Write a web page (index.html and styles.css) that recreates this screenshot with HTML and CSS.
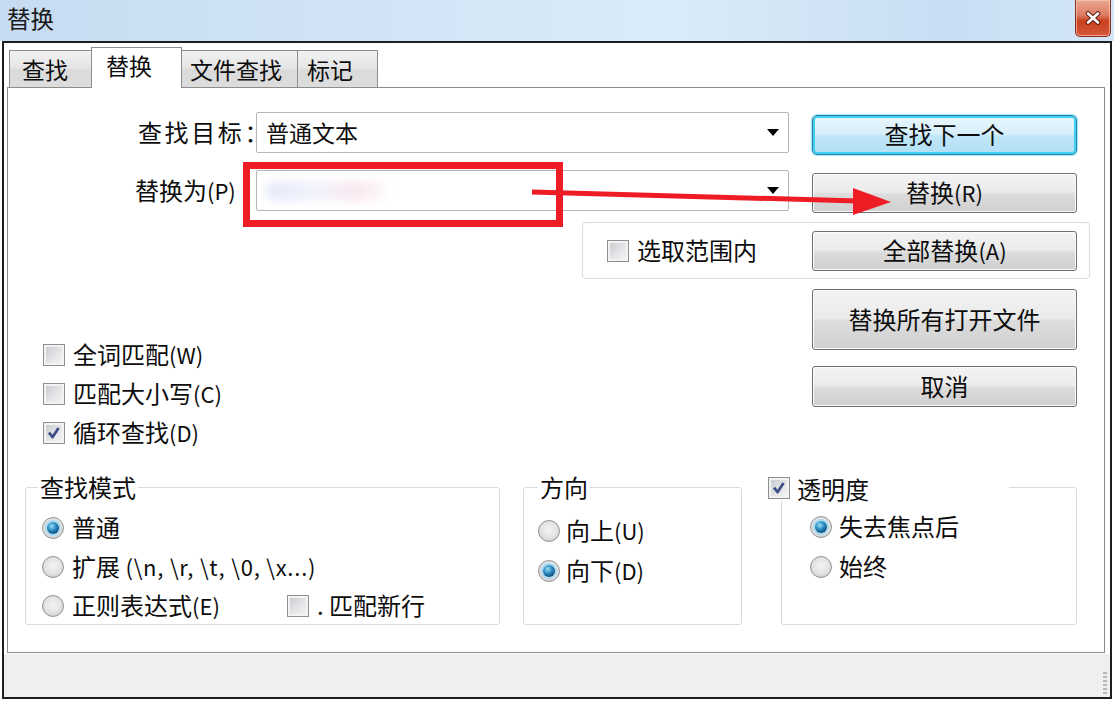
FILE: index.html
```html
<!DOCTYPE html>
<html lang="zh-CN">
<head>
<meta charset="utf-8">
<title>替换</title>
<link rel="stylesheet" href="styles.css">
</head>
<body>
<div class="window">
  <div class="titlebar">
    <span class="title">替换</span>
    <div class="close">
      <svg width="16" height="14" viewBox="0 0 16 14"><path d="M3 2.5 L13 11.5 M13 2.5 L3 11.5" stroke="#5a1a10" stroke-width="4.5" stroke-linecap="round"/><path d="M3 2.5 L13 11.5 M13 2.5 L3 11.5" stroke="#fff" stroke-width="2.6" stroke-linecap="round"/></svg>
    </div>
  </div>
  <div class="frame">
    <div class="content">
      <div class="tabs">
        <div class="tab t1">查找</div>
        <div class="tab t2 active">替换</div>
        <div class="tab t3">文件查找</div>
        <div class="tab t4">标记</div>
      </div>
      <div class="page">
        <div class="top">
          <div class="left">
            <div class="field f1">
              <span class="lbl l1">查找目标：</span>
              <div class="combo"><span class="val">普通文本</span><span class="arrow"></span></div>
            </div>
            <div class="field f2">
              <span class="lbl l2">替换为<span class="lat">(P)</span></span>
              <div class="combo"><span class="smudge"></span><span class="arrow"></span></div>
            </div>
            <div class="checks">
              <div class="chk"><span class="box"></span><span>全词匹配<span class="lat">(W)</span></span></div>
              <div class="chk"><span class="box"></span><span>匹配大小写<span class="lat">(C)</span></span></div>
              <div class="chk"><span class="box"><svg class="tick" viewBox="0 0 22 22"><path d="M5.5 10.5 L9.5 15.5 L16 5.5" fill="none" stroke="#3b4f88" stroke-width="3" stroke-linejoin="round"/></svg></span><span>循环查找<span class="lat">(D)</span></span></div>
            </div>
          </div>
          <div class="right">
            <button class="btn default">查找下一个</button>
            <button class="btn b2">替换<span class="lat">(R)</span></button>
            <div class="selbox">
              <div class="chk"><span class="box"></span><span>选取范围内</span></div>
              <button class="btn">全部替换<span class="lat">(A)</span></button>
            </div>
            <button class="btn tall">替换所有打开文件</button>
            <button class="btn cancel">取消</button>
          </div>
        </div>
        <div class="groups">
          <div class="group g1">
            <div class="legend">查找模式</div>
            <div class="opts">
              <div class="opt"><span class="radio on"></span><span>普通</span></div>
              <div class="opt"><span class="radio"></span><span>扩展 <span class="lat wide">(\n, \r, \t, \0, \x...)</span></span></div>
              <div class="opt">
                <div class="opt-first"><span class="radio"></span><span>正则表达式<span class="lat">(E)</span></span></div>
                <div class="chk"><span class="box"></span><span>. 匹配新行</span></div>
              </div>
            </div>
          </div>
          <div class="group g2">
            <div class="legend">方向</div>
            <div class="opts">
              <div class="opt"><span class="radio"></span><span>向上<span class="lat">(U)</span></span></div>
              <div class="opt"><span class="radio on"></span><span>向下<span class="lat">(D)</span></span></div>
            </div>
          </div>
          <div class="group g3">
            <div class="legend"><div class="chk"><span class="box"><svg class="tick" viewBox="0 0 22 22"><path d="M5.5 10.5 L9.5 15.5 L16 5.5" fill="none" stroke="#3b4f88" stroke-width="3" stroke-linejoin="round"/></svg></span><span>透明度</span></div></div>
            <div class="opts">
              <div class="opt"><span class="radio on"></span><span>失去焦点后</span></div>
              <div class="opt"><span class="radio"></span><span>始终</span></div>
            </div>
          </div>
        </div>
      </div>
    </div>
    <div class="status"><span class="grip"></span></div>
  </div>
  <div class="annot-rect"></div>
  <svg class="annot-arrow" width="1114" height="702" viewBox="0 0 1114 702">
    <line x1="532" y1="192" x2="858" y2="201" stroke="#ee1c24" stroke-width="5"/>
    <polygon points="853,188 891,202 853,215" fill="#ee1c24"/>
  </svg>
</div>
</body>
</html>
```

FILE: styles.css
```css
* { box-sizing: border-box; }
html, body { margin: 0; padding: 0; }
body {
  width: 1114px;
  height: 702px;
  overflow: hidden;
  background: #fff;
  font-family: "Noto Sans CJK SC", "Noto Sans", sans-serif;
  font-size: 24px;
  color: #0d0d0d;
}
.window { position: relative; width: 1114px; height: 702px; }

/* title bar */
.titlebar {
  height: 41px;
  display: flex;
  justify-content: space-between;
  align-items: flex-start;
  background: linear-gradient(to right, #c7dcf1 0%, #d2e5f7 35%, #daecf9 60%, #c8def3 85%, #d3e7f8 100%);
}
.title { font-size: 23.5px; line-height: 36px; padding-left: 7px; color: #1a1a1a; }
.close {
  width: 36px;
  height: 37px;
  margin-right: 3px;
  border: 1px solid #86301f;
  border-top: none;
  border-radius: 0 0 5px 5px;
  background: linear-gradient(#eaa693 0%, #dd7c63 42%, #c8401f 58%, #d4593a 100%);
  box-shadow: inset 0 0 0 1px rgba(255, 210, 190, 0.6);
  display: flex;
  align-items: center;
  justify-content: center;
}

/* frame */
.frame {
  height: 658px;
  margin: 0 2px;
  border: 2px solid #1e1e1e;
  display: flex;
  flex-direction: column;
}
.content { padding: 4px 5px 1px 3px; background: #fff; }

.tabs { height: 40px; display: flex; align-items: flex-end; padding-left: 2px; }
.tab {
  height: 37px;
  border: 1px solid #8d8d8d;
  border-bottom: none;
  margin-left: -1px;
  background: linear-gradient(#f1f1f1 0%, #e6e6e6 45%, #dadada 55%, #dddddd 100%);
  font-size: 23px;
  line-height: 33px;
  padding-top: 2px;
  white-space: nowrap;
}
.tab.t1 { margin-left: 0; width: 83px; padding-left: 12px; }
.tab.t2 { width: 91px; padding-left: 14px; }
.tab.t3 { width: 117px; padding-left: 8px; }
.tab.t4 { width: 81px; padding-left: 9px; }
.tab.active {
  height: 41px;
  margin-bottom: -1px;
  background: #fff;
  position: relative;
  z-index: 1;
  padding-top: 0;
  line-height: 35px;
}

.page {
  height: 566px;
  border: 1px solid #8d8d8d;
  background: #fff;
}

.lat { font-size: 22px; }
.lat.wide { letter-spacing: 0.8px; }

/* top area */
.top { display: flex; padding-top: 24px; }
.left { width: 781px; }
.field { display: flex; align-items: center; height: 41px; }
.f2 { margin-top: 17px; }
.lbl { width: 248px; white-space: nowrap; padding-bottom: 2px; }
.l1 { padding-left: 130px; letter-spacing: 2.6px; }
.l2 { padding-left: 127px; }
.combo {
  width: 533px;
  height: 41px;
  border: 1px solid #b4b6bb;
  border-radius: 2px;
  display: flex;
  align-items: center;
  padding-left: 9px;
  background: #fff;
}
.val { font-size: 23px; padding-bottom: 2px; }
.arrow {
  margin-left: auto;
  margin-right: 9px;
  width: 0;
  height: 0;
  border-left: 6px solid transparent;
  border-right: 6px solid transparent;
  border-top: 7px solid #000;
}
.smudge {
  width: 120px;
  height: 20px;
  border-radius: 10px;
  background: linear-gradient(to right, #dfe2f7, #eef0fb 40%, #f8e3ec 75%, #fdf5f8);
  filter: blur(4px);
  opacity: 0.8;
}

.checks { margin-top: 124px; padding-left: 35px; }
.chk { display: flex; align-items: center; gap: 8px; white-space: nowrap; }
.checks .chk { height: 39px; }
.chk > span:last-child, .opt > span:last-child, .opt-first > span:last-child { margin-top: -3px; }
.box {
  width: 22px;
  height: 22px;
  flex: none;
  border: 1px solid #8e8f8f;
  background: linear-gradient(135deg, #c4c7cc 0%, #e4e5e7 55%, #f6f6f6 100%);
  box-shadow: inset 0 0 0 2px #f3f3f3;
  display: flex;
  align-items: center;
  justify-content: center;
}
.tick { width: 20px; height: 20px; }

.right {
  margin-left: 23px;
  width: 265px;
  padding-top: 3px;
  display: flex;
  flex-direction: column;
}
.btn {
  width: 265px;
  height: 40px;
  border: 1px solid #707070;
  border-radius: 3px;
  background: linear-gradient(#f3f3f3 0%, #ebebeb 48%, #dddddd 52%, #cfcfcf 100%);
  box-shadow: inset 0 0 0 1px #fbfbfb;
  font-family: inherit;
  font-size: 24px;
  color: #0d0d0d;
  padding: 0 0 2px 0;
  line-height: 34px;
}
.btn.default {
  border: 1px solid #2e7fa6;
  border-radius: 5px;
  background: linear-gradient(#e8f6fd 0%, #d6effb 48%, #c0e6f8 52%, #b2def4 100%);
  box-shadow: inset 0 0 0 2px #40d0f2, 0 0 1px 1px #9fe6f8;
}
.btn.b2 { margin-top: 18px; }
.selbox {
  margin: 9px -13px 0 -230px;
  width: 508px;
  height: 57px;
  border: 1px solid #d6dde3;
  border-radius: 4px;
  display: flex;
  align-items: center;
  justify-content: space-between;
  padding: 0 12px 0 24px;
}
.btn.tall { margin-top: 10px; height: 61px; }
.btn.cancel { margin-top: 16px; height: 41px; }

/* groups */
.groups { display: flex; margin-top: 35px; padding-left: 17px; }
.group {
  height: 138px;
  border: 1px solid #d5dde3;
  border-radius: 3px;
}
.g1 { width: 475px; }
.g2 { width: 219px; margin-left: 23px; }
.g3 { width: 296px; margin-left: 39px; }
.legend {
  margin-top: -13px;
  height: 26px;
  line-height: 23px;
  background: #fff;
  padding: 0 2px;
  width: fit-content;
  white-space: nowrap;
}
.g1 .legend { margin-left: 12px; }
.g2 .legend { margin-left: 14px; }
.g3 .legend { margin-left: -15px; width: 242px; padding: 0 1px; display: flex; align-items: center; }
.g3 .legend .chk { gap: 7px; }
.g3 .legend .chk > span:last-child { margin-top: 0; }

.opts { display: flex; flex-direction: column; }
.opt { display: flex; align-items: center; gap: 8px; white-space: nowrap; }
.g1 .opts { margin-top: 7px; padding-left: 16px; }
.g1 .opt { height: 39px; }
.opt-first { display: flex; align-items: center; gap: 8px; width: 237px; }
.g2 .opts { margin-top: 10px; padding-left: 14px; }
.g2 .opt { height: 40px; gap: 6px; }
.g3 .opts { margin-top: 6px; padding-left: 28px; }
.g3 .opt { height: 40px; gap: 7px; }

.radio {
  width: 22px;
  height: 22px;
  flex: none;
  border-radius: 50%;
  border: 1px solid #949494;
  background: radial-gradient(circle at 50% 45%, #f4f4f4 0%, #e2e2e2 55%, #cfcfcf 80%, #ececec 100%);
  display: flex;
  align-items: center;
  justify-content: center;
}
.radio.on::after {
  content: "";
  width: 12px;
  height: 12px;
  border-radius: 50%;
  background: radial-gradient(circle at 40% 35%, #9fe0f8 0%, #2f90c6 38%, #0f4b78 75%, #1a5e8c 100%);
  box-shadow: 0 0 0 2px #a9daf3;
}

/* status bar */
.status {
  flex: 1;
  background: #f0eeee;
  display: flex;
  justify-content: flex-end;
  align-items: flex-end;
  padding: 0 3px 3px 0;
}
.grip {
  width: 4px;
  height: 22px;
  background: repeating-linear-gradient(#b9b9b9 0 2px, transparent 2px 4px);
}

/* annotation overlays */
.annot-rect {
  position: absolute;
  left: 243px;
  top: 162px;
  width: 320px;
  height: 65px;
  border: 7px solid #ee1c24;
}
.annot-arrow { position: absolute; left: 0; top: 0; pointer-events: none; }
```
